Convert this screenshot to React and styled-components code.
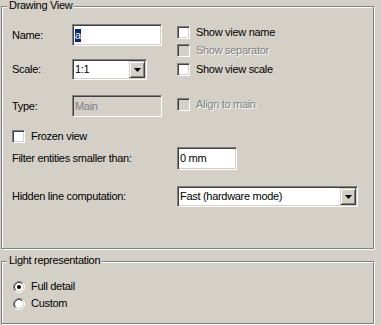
import React from 'react';
import styled, { createGlobalStyle, css } from 'styled-components';

const Global = createGlobalStyle`
  html, body { margin: 0; padding: 0; background: #d4d0c8; }
  body { font-family: "Liberation Sans", Arial, sans-serif; font-size: 11px; letter-spacing: -0.3px; color: #000; }
`;

const sunken = css`
  box-sizing: border-box;
  border: 1px solid;
  border-color: #808080 #ffffff #ffffff #808080;
  box-shadow: inset 1px 1px 0 #404040, inset -1px -1px 0 #d4d0c8;
`;

const Page = styled.div`
  width: 381px;
  height: 325px;
  box-sizing: border-box;
  padding: 6px 0 0 1px;
  background: #d4d0c8;
  overflow: hidden;
  display: flex;
  flex-direction: column;
  gap: 12px;
`;

const Group = styled.section`
  position: relative;
  box-sizing: border-box;
  width: 373px;
  height: ${p => p.$h}px;
  flex: none;
  border: 1px solid #808080;
  box-shadow: inset 1px 1px 0 #ffffff, 1px 1px 0 #ffffff;
  padding: ${p => p.$pad};
  display: flex;
  flex-direction: column;
`;

const Legend = styled.span`
  position: absolute;
  top: -8px;
  left: 5px;
  padding: 0 2px;
  line-height: 13px;
  background: #d4d0c8;
`;

const Top = styled.div`
  display: flex;
`;

const LeftCol = styled.div`
  width: 165px;
  display: flex;
  flex-direction: column;
`;

const RightCol = styled.div`
  display: flex;
  flex-direction: column;
`;

const FieldRow = styled.div`
  display: flex;
  align-items: center;
  margin-top: ${p => p.$mt || 0}px;
  height: ${p => p.$h}px;
`;

const Label = styled.span`
  width: ${p => p.$w}px;
  flex: none;
  line-height: 13px;
  color: ${p => (p.$disabled ? '#808080' : '#000')};
  text-shadow: ${p => (p.$disabled ? '1px 1px 0 #ffffff' : 'none')};
`;

const TextBox = styled.div`
  ${sunken}
  width: ${p => p.$w}px;
  height: ${p => p.$h}px;
  flex: none;
  display: flex;
  align-items: center;
  padding: 0 2px;
  background: ${p => (p.$disabled ? '#d4d0c8' : '#ffffff')};
  color: ${p => (p.$disabled ? '#808080' : '#000')};
  line-height: 13px;
`;

const Selected = styled.span`
  background: #0a246a;
  color: #ffffff;
`;

const Combo = styled.div`
  ${sunken}
  width: ${p => p.$w}px;
  height: ${p => p.$h}px;
  flex: none;
  display: flex;
  align-items: stretch;
  padding: 1px 1px 1px 2px;
  background: #ffffff;
`;

const ComboValue = styled.span`
  flex: 1;
  display: flex;
  align-items: center;
  line-height: 13px;
`;

const DropButton = styled.span`
  box-sizing: border-box;
  width: 16px;
  flex: none;
  display: flex;
  align-items: center;
  justify-content: center;
  background: #d4d0c8;
  border: 1px solid;
  border-color: #d4d0c8 #404040 #404040 #d4d0c8;
  box-shadow: inset 1px 1px 0 #ffffff, inset -1px -1px 0 #808080;
`;

const CheckRow = styled.div`
  display: flex;
  align-items: center;
  gap: 6px;
  height: 13px;
  margin-top: ${p => p.$mt || 0}px;
  line-height: 13px;
  color: ${p => (p.$disabled ? '#808080' : '#000')};
  text-shadow: ${p => (p.$disabled ? '1px 1px 0 #ffffff' : 'none')};
`;

const Box = styled.span`
  ${sunken}
  width: 13px;
  height: 13px;
  flex: none;
  background: ${p => (p.$disabled ? '#d4d0c8' : '#ffffff')};
`;

const RadioList = styled.div`
  display: flex;
  flex-direction: column;
  gap: 4px;
  padding-left: 1px;
`;

const Arrow = () => (
  <svg width="7" height="4" viewBox="0 0 7 4">
    <path d="M0 0H7L3.5 4Z" fill="#000" />
  </svg>
);

const RadioIcon = ({ checked }) => (
  <svg width="12" height="12" viewBox="0 0 12 12" style={{ flex: 'none' }}>
    <circle cx="6" cy="6" r="4.5" fill="#ffffff" />
    <path d="M2.11 9.89A5.5 5.5 0 0 1 9.89 2.11" fill="none" stroke="#808080" />
    <path d="M9.89 2.11A5.5 5.5 0 0 1 2.11 9.89" fill="none" stroke="#ffffff" />
    <path d="M2.82 9.18A4.5 4.5 0 0 1 9.18 2.82" fill="none" stroke="#404040" />
    <path d="M9.18 2.82A4.5 4.5 0 0 1 2.82 9.18" fill="none" stroke="#d4d0c8" />
    {checked && <circle cx="6" cy="6" r="2" fill="#000" />}
  </svg>
);

const Check = ({ children, disabled, mt }) => (
  <CheckRow $mt={mt} $disabled={disabled}>
    <Box $disabled={disabled} />
    <span>{children}</span>
  </CheckRow>
);

const Radio = ({ children, checked }) => (
  <CheckRow>
    <RadioIcon checked={checked} />
    <span>{children}</span>
  </CheckRow>
);

export default function App() {
  return (
    <>
      <Global />
      <Page>
        <Group $h={243} $pad="17px 0 0 10px">
          <Legend>Drawing View</Legend>
          <Top>
            <LeftCol>
              <FieldRow $h={22}>
                <Label $w={60}>Name:</Label>
                <TextBox $w={90} $h={22}>
                  <Selected>a</Selected>
                </TextBox>
              </FieldRow>
              <FieldRow $h={21} $mt={13}>
                <Label $w={60}>Scale:</Label>
                <Combo $w={75} $h={21}>
                  <ComboValue>1:1</ComboValue>
                  <DropButton><Arrow /></DropButton>
                </Combo>
              </FieldRow>
              <FieldRow $h={22} $mt={15}>
                <Label $w={60}>Type:</Label>
                <TextBox $w={90} $h={22} $disabled>Main</TextBox>
              </FieldRow>
            </LeftCol>
            <RightCol>
              <Check mt={2}>Show view name</Check>
              <Check mt={5} disabled>Show separator</Check>
              <Check mt={6}>Show view scale</Check>
              <Check mt={22} disabled>Align to main</Check>
            </RightCol>
          </Top>
          <Check mt={13}>Frozen view</Check>
          <FieldRow $h={23} $mt={4}>
            <Label $w={165}>Filter entities smaller than:</Label>
            <TextBox $w={60} $h={23}>0 mm</TextBox>
          </FieldRow>
          <FieldRow $h={21} $mt={16}>
            <Label $w={165}>Hidden line computation:</Label>
            <Combo $w={181} $h={21}>
              <ComboValue>Fast (hardware mode)</ComboValue>
              <DropButton><Arrow /></DropButton>
            </Combo>
          </FieldRow>
        </Group>
        <Group $h={63} $pad="18px 0 0 10px">
          <Legend>Light representation</Legend>
          <RadioList>
            <Radio checked>Full detail</Radio>
            <Radio>Custom</Radio>
          </RadioList>
        </Group>
      </Page>
    </>
  );
}
